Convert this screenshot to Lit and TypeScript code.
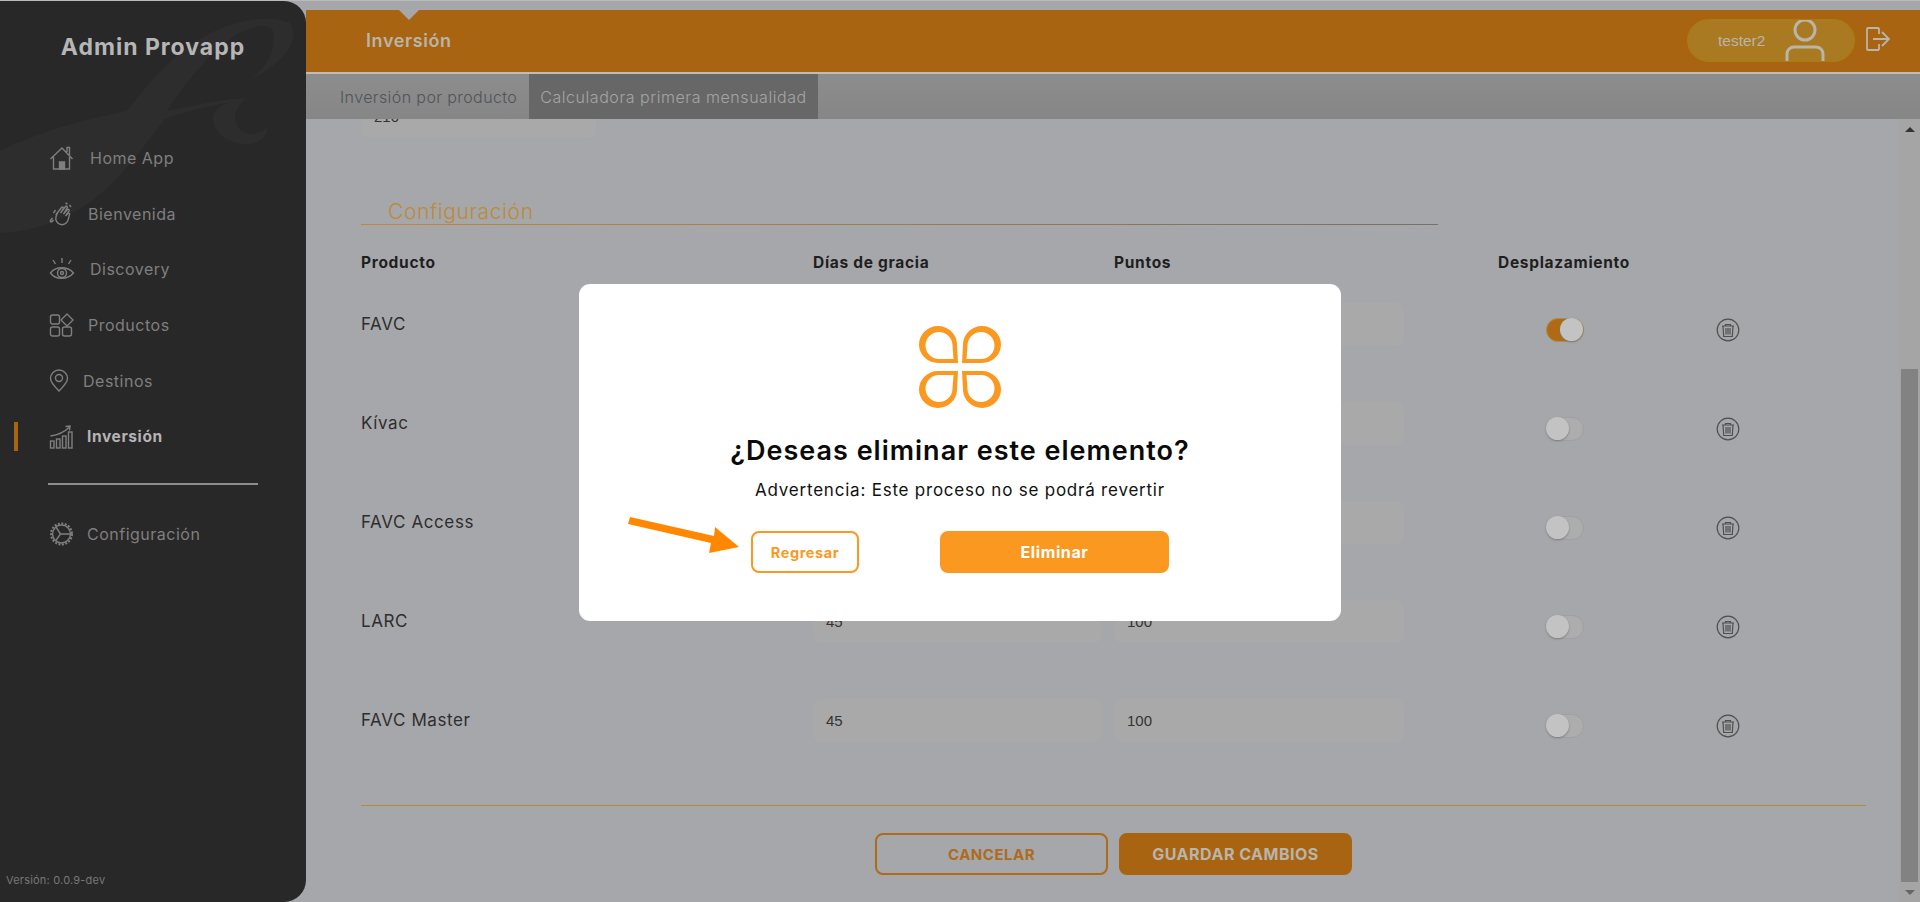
import { LitElement, css, html, svg } from "lit";
import { customElement } from "lit/decorators.js";

const navIcons: Record<string, unknown> = {
  home: svg`<path d="M1 13 12.500 2 23 13M4 11v12h16V11M17.500 6V1.500h2.500V9"/><path d="M10 23v-7h5v7z" fill="#7f7f7f"/>`,
  clap: svg`<path d="M7 12 12 5.500c1-1 2.300-.2 1.800 1L11 11l5-6.500c1-1 2.400 0 1.800 1.200L14 12l4-4.500c1-.8 2.200.3 1.600 1.400L16 14l2.500-2.500c1-.7 2 .2 1.500 1.300-1 3-1 6-3 8-2.500 2.500-6.500 2.500-9 0-2.500-3-2-6-.5-8.800z"/><path d="M6 8 4 11M3 16l-2 2.500c-.5 1 .5 2 1.500 1.300L4 18M16 1l2 1M20 3l1.500 2"/>`,
  eye: svg`<path d="M1 16c5-7 17-7 23 0-6 7-18 7-23 0z"/><circle cx="12.500" cy="16" r="4.500"/><circle cx="12.500" cy="16" r="1.500"/><path d="M12.500 1v5M3.500 3 6 7M21.500 3 19 7"/>`,
  products: svg`<rect x="1" y="2" width="9" height="9" rx="2"/><path d="M17.500 1 23.500 7l-6 6-6-6z" stroke-linejoin="round"/><rect x="1" y="14" width="9" height="9" rx="2"/><rect x="13" y="14" width="9" height="9" rx="2"/>`,
  pin: svg`<path d="M9.500 22C5 17.500 1 13.500 1 9.500a8.500 8.500 0 0 1 17 0c0 4-4 8-8.500 12.500z"/><circle cx="9.500" cy="9" r="3.500"/>`,
  chart: svg`<path d="M1 11C8 10 15 7 20 2M16 1.500 20.500 1l-.5 4.500"/><rect x="1" y="16" width="3.500" height="7"/><rect x="7" y="14" width="3.500" height="9"/><rect x="13" y="11" width="3.500" height="12"/><rect x="19" y="7" width="3.500" height="16"/>`,
  gear: svg`<circle cx="12" cy="12" r="9"/><circle cx="12" cy="12" r="10.500" stroke-dasharray="2 1.500" stroke-width="2"/><path d="M6.500 5 11 12l-5 7M11 12h12"/>`,
};

const navItems = [
  { label: "Home App", icon: "home", gap: 15 },
  { label: "Bienvenida", icon: "clap", gap: 13 },
  { label: "Discovery", icon: "eye", gap: 15 },
  { label: "Productos", icon: "products", gap: 13 },
  { label: "Destinos", icon: "pin", gap: 8 },
  { label: "Inversión", icon: "chart", gap: 12, active: true },
];

const products = [
  { name: "FAVC", on: true },
  { name: "Kívac", on: false },
  { name: "FAVC Access", on: false },
  { name: "LARC", on: false },
  { name: "FAVC Master", on: false },
];

@customElement("app-root")
export class AppRoot extends LitElement {
  static styles = css`
    :host {
      display: block;
      position: relative;
      width: 1920px;
      height: 902px;
      overflow: hidden;
      background: #a6a7aa;
      font-family: "Inter", "Noto Sans", sans-serif;
    }
    .page {
      display: flex;
      height: 901px;
      border-top: 1px solid #bababa;
    }

    .sidebar {
      position: relative;
      flex: 0 0 306px;
      background: #282828;
      border-radius: 0 22px 22px 0;
      overflow: hidden;
      display: flex;
      flex-direction: column;
    }
    .watermark {
      position: absolute;
      left: 0;
      top: 0;
    }
    .brand {
      position: relative;
      margin: 33px 0 0;
      text-align: center;
      color: #b6b6b6;
      font-size: 23px;
      line-height: 26px;
      font-weight: 700;
      letter-spacing: 1px;
    }
    .nav {
      position: relative;
      margin-top: 70px;
      padding-left: 49px;
      display: flex;
      flex-direction: column;
    }
    .nav-item {
      position: relative;
      display: flex;
      align-items: center;
      height: 55.8px;
      color: #7f7f7f;
      font-size: 16px;
      letter-spacing: 0.5px;
    }
    .nav-item svg {
      flex: 0 0 26px;
      fill: none;
      stroke: #7f7f7f;
      stroke-width: 1.4;
    }
    .nav-item.active {
      color: #b4b4b6;
      font-weight: 700;
      font-size: 15.5px;
      letter-spacing: 0.6px;
    }
    .nav-item.active::before {
      content: "";
      position: absolute;
      left: -35px;
      top: 13px;
      width: 4px;
      height: 29px;
      background: #a86411;
    }
    .nav-line {
      width: 210px;
      height: 2px;
      background: #8f8f8f;
      margin: 18px 0 21px -1px;
    }
    .version {
      position: relative;
      margin-top: auto;
      padding: 0 0 15px 6px;
      color: #777;
      font-size: 11px;
      line-height: 14px;
      letter-spacing: 0.2px;
    }

    .main {
      flex: 1;
      min-width: 0;
      display: flex;
      flex-direction: column;
      padding-top: 9px;
    }
    .topbar {
      position: relative;
      display: flex;
      align-items: center;
      height: 62px;
      background: #a86411;
      flex: none;
      border-bottom: 2px solid #c0bdb8;
      padding-left: 60px;
      padding-right: 30px;
    }
    .topbar::before {
      content: "";
      position: absolute;
      left: 93px;
      top: 0;
      border-left: 10px solid transparent;
      border-right: 10px solid transparent;
      border-top: 10px solid #a6a7aa;
    }
    .page-title {
      color: #b8b5ac;
      font-size: 18px;
      font-weight: 600;
      letter-spacing: 0.6px;
      margin-top: -1px;
    }
    .user {
      margin-left: auto;
      width: 168px;
      height: 43px;
      box-sizing: border-box;
      border: 1px solid #a87f0f;
      border-radius: 22px;
      background: #a97a21;
      display: flex;
      align-items: flex-end;
      padding-left: 30px;
      margin-top: -1px;
      color: #b9b5a9;
      font-family: "Liberation Sans", sans-serif;
      font-size: 15.5px;
      overflow: hidden;
    }
    .user span {
      align-self: center;
      width: 67px;
    }
    .logout {
      margin-left: 11px;
      margin-top: -4px;
    }
    .tabs {
      display: flex;
      flex: none;
      height: 45px;
      background: linear-gradient(#8d8d8d, #868686);
      padding-left: 24px;
      font-size: 16px;
      font-weight: 300;
      letter-spacing: 0.4px;
    }
    .tab {
      display: flex;
      align-items: center;
      padding: 0 10px;
      color: #505358;
      white-space: nowrap;
    }
    .tab.active {
      background: #676767;
      color: #a5a5a5;
      margin-left: 2px;
      padding: 0 11px;
      letter-spacing: 0.55px;
    }

    .body {
      flex: 1;
      min-height: 0;
      display: flex;
    }
    .content {
      flex: 1;
      min-width: 0;
      overflow: hidden;
      padding-left: 55px;
    }
    .field {
      box-sizing: border-box;
      height: 43px;
      display: flex;
      align-items: center;
      padding-left: 13px;
      background: #a9a9a9;
      border-radius: 8px;
      color: #333;
      font-family: "Liberation Sans", sans-serif;
      font-size: 15px;
    }
    .field.first {
      width: 235px;
      margin-top: -24px;
    }
    .section {
      width: 1077px;
      margin-top: 62px;
      padding-left: 27px;
      box-sizing: border-box;
      height: 25px;
      line-height: 24px;
      color: #bd8a37;
      font-size: 21px;
      font-weight: 300;
      letter-spacing: 0.6px;
      border-bottom: 1px solid;
      border-image: linear-gradient(90deg, #bd8a37, #77706a) 1;
    }
    .table {
      display: grid;
      grid-template-columns: 452px 301px 384px 218px 40px;
      grid-auto-rows: 99px;
      margin-top: 32px;
    }
    .head {
      display: grid;
      grid-template-columns: 452px 301px 384px 218px;
      margin-top: 30px;
      color: #1f1f1f;
      font-size: 15.5px;
      line-height: 16px;
      font-weight: 700;
      letter-spacing: 0.7px;
    }
    .name {
      height: 43px;
      display: flex;
      align-items: center;
      color: #2e2e2e;
      font-size: 17px;
      letter-spacing: 0.6px;
      margin-top: -1px;
    }
    .field.a {
      width: 289px;
    }
    .field.b {
      width: 290px;
    }
    .toggle {
      position: relative;
      box-sizing: border-box;
      width: 38px;
      height: 24px;
      margin: 15px 0 0 48px;
      border-radius: 12px;
      border: 1px solid #a0a0a0;
      background: #adadad;
    }
    .toggle::after {
      content: "";
      position: absolute;
      left: -1px;
      top: -1px;
      width: 23px;
      height: 23px;
      border-radius: 50%;
      background: #c3c3c3;
      box-shadow: 0 1px 2px #7d7d7d;
    }
    .toggle.on {
      background: #b06a13;
      border-color: #a88c5a;
    }
    .toggle.on::after {
      left: 13px;
    }
    .trash {
      margin-top: 15px;
    }
    .footer-line {
      width: 1505px;
      height: 1px;
      margin-top: 7px;
      background: #b5883c;
    }
    .actions {
      width: 1505px;
      display: flex;
      justify-content: center;
      gap: 11px;
      margin-top: 27px;
    }
    .btn {
      box-sizing: border-box;
      width: 233px;
      height: 42px;
      border-radius: 8px;
      border: 2px solid #ae6b1b;
      display: flex;
      align-items: center;
      justify-content: center;
      color: #ae6b1b;
      font-size: 15px;
      font-weight: 700;
      letter-spacing: 0.5px;
    }
    .btn.fill {
      background: #a86411;
      border-color: #a86411;
      color: #b8b5ac;
      font-size: 16px;
      letter-spacing: 0.5px;
    }
    .scrollbar {
      flex: 0 0 21px;
      background: #a5a5a5;
      display: flex;
      flex-direction: column;
      align-items: center;
    }
    .arrow-up {
      margin-top: 8px;
      border-left: 5px solid transparent;
      border-right: 5px solid transparent;
      border-bottom: 5px solid #333;
    }
    .thumb {
      width: 17px;
      height: 513px;
      margin-top: 237px;
      background: #828282;
    }
    .arrow-down {
      margin-top: 8px;
      border-left: 5px solid transparent;
      border-right: 5px solid transparent;
      border-top: 5px solid #666;
    }

    .overlay {
      position: absolute;
      inset: 0;
      padding-top: 3px;
      display: flex;
      align-items: center;
      justify-content: center;
    }
    .modal {
      position: relative;
      box-sizing: border-box;
      width: 762px;
      height: 337px;
      padding-top: 42px;
      background: #fff;
      border-radius: 11px;
      display: flex;
      flex-direction: column;
      align-items: center;
    }
    .modal h2 {
      margin: 25px 0 0;
      color: #0a0a0a;
      font-size: 27px;
      line-height: 36px;
      font-weight: 600;
      letter-spacing: 1px;
    }
    .modal p {
      margin: 11px 0 0;
      color: #111;
      font-size: 17px;
      line-height: 20px;
      letter-spacing: 0.78px;
    }
    .modal-actions {
      width: 418px;
      display: flex;
      justify-content: space-between;
      margin-top: 31px;
    }
    .modal-btn {
      box-sizing: border-box;
      height: 42px;
      border-radius: 8px;
      border: 2px solid #fb981f;
      display: flex;
      align-items: center;
      justify-content: center;
      color: #fb981f;
      font-size: 14.5px;
      font-weight: 700;
      letter-spacing: 0.6px;
    }
    .modal-btn.back {
      width: 108px;
    }
    .modal-btn.del {
      width: 229px;
      background: #fb981f;
      color: #fff;
      font-size: 16px;
      letter-spacing: 0.6px;
    }
    .pointer {
      position: absolute;
      left: 49px;
      top: 232px;
    }
  `;

  private trash() {
    return html`<svg class="trash" width="24" height="24" viewBox="0 0 24 24" fill="none" stroke="#4f4f4f">
      <circle cx="12" cy="12" r="10.800" stroke-width="1.200" />
      <path d="M6 8h12M9.500 8V6.500h5V8M7 8l.7 10.500h8.600L17 8M10 10v6.500M12 10v6.500M14 10v6.500" stroke-width="1.200" />
    </svg>`;
  }

  private renderSidebar() {
    return html`<aside class="sidebar">
      <svg class="watermark" width="306" height="260" viewBox="0 0 306 260" fill="#2d2d2d">
        <path d="M0 150C40 130 85 118 127 110 150 80 180 45 215 30 240 18 270 14 290 22 300 35 290 60 247 80 268 68 278 45 272 28 262 20 235 30 215 50 195 70 180 90 167 110 190 105 225 98 247 97 225 103 190 108 165 118 140 150 110 195 67 215 40 228 15 232 0 232z" />
        <path d="M247 97C225 100 212 108 213 118 214 135 232 144 250 143 262 141 267 134 267 126 262 132 250 136 242 130 232 122 232 108 247 97z" />
      </svg>
      <div class="brand">Admin Provapp</div>
      <nav class="nav">
        ${navItems.map(
          (item) => html`<div class="nav-item ${item.active ? "active" : ""}">
            <svg width="26" height="24" viewBox="0 0 25 24">${navIcons[item.icon]}</svg>
            <span style="margin-left:${item.gap}px">${item.label}</span>
          </div>`
        )}
        <div class="nav-line"></div>
        <div class="nav-item">
          <svg width="26" height="24" viewBox="0 0 25 24">${navIcons.gear}</svg>
          <span style="margin-left:12px">Configuración</span>
        </div>
      </nav>
      <div class="version">Versión: 0.0.9-dev</div>
    </aside>`;
  }

  private renderTopbar() {
    return html`<header class="topbar">
        <div class="page-title">Inversión</div>
        <div class="user">
          <span>tester2</span>
          <svg width="40" height="42" viewBox="0 0 40 42" fill="none" stroke="#b9b5a9" stroke-width="3">
            <circle cx="20" cy="11" r="10" />
            <path d="M2 42V35a7 7 0 0 1 7-7h22a7 7 0 0 1 7 7v7" />
          </svg>
        </div>
        <svg class="logout" width="24" height="24" viewBox="0 0 24 24" fill="none" stroke="#b9b5a9" stroke-width="1.800">
          <path d="M13 1H2a1 1 0 0 0-1 1v20a1 1 0 0 0 1 1h11M13 1v6M13 17v6M7 12h15M16 5l7 7-7 7" />
        </svg>
      </header>
      <div class="tabs">
        <div class="tab">Inversión por producto</div>
        <div class="tab active">Calculadora primera mensualidad</div>
      </div>`;
  }

  private renderContent() {
    return html`<div class="content">
      <div class="field first">210</div>
      <div class="section">Configuración</div>
      <div class="head">
        <div>Producto</div>
        <div>Días de gracia</div>
        <div>Puntos</div>
        <div>Desplazamiento</div>
      </div>
      <div class="table">
        ${products.map(
          (p) => html`<div class="name">${p.name}</div>
            <div class="field a">45</div>
            <div class="field b">100</div>
            <div class="toggle ${p.on ? "on" : ""}"></div>
            ${this.trash()}`
        )}
      </div>
      <div class="footer-line"></div>
      <div class="actions">
        <div class="btn">CANCELAR</div>
        <div class="btn fill">GUARDAR CAMBIOS</div>
      </div>
    </div>`;
  }

  private renderModal() {
    const petal = svg`<path fill-rule="evenodd" d="M39 37H19A19 18.500 0 1 1 38 18.500L39 37zM34.500 33H20A13.500 13.500 0 1 1 33.500 19.500z" />`;
    return html`<div class="overlay">
      <div class="modal">
        <svg width="82" height="82" viewBox="0 0 82 82" fill="#fb981f">
          <g>${petal}</g>
          <g transform="translate(82 0) scale(-1 1)">${petal}</g>
          <g transform="translate(0 82) scale(1 -1)">${petal}</g>
          <g transform="translate(82 82) scale(-1 -1)">${petal}</g>
        </svg>
        <h2>¿Deseas eliminar este elemento?</h2>
        <p>Advertencia: Este proceso no se podrá revertir</p>
        <div class="modal-actions">
          <div class="modal-btn back">Regresar</div>
          <div class="modal-btn del">Eliminar</div>
        </div>
        <svg class="pointer" width="114" height="40" viewBox="628 516 114 40" fill="#ff8800">
          <polygon points="630,517 628,524 711,543 709,553 739,547 715,527 714,536" />
        </svg>
      </div>
    </div>`;
  }

  render() {
    return html`<div class="page">
        ${this.renderSidebar()}
        <div class="main">
          ${this.renderTopbar()}
          <div class="body">
            ${this.renderContent()}
            <div class="scrollbar">
              <div class="arrow-up"></div>
              <div class="thumb"></div>
              <div class="arrow-down"></div>
            </div>
          </div>
        </div>
      </div>
      ${this.renderModal()}`;
  }
}
